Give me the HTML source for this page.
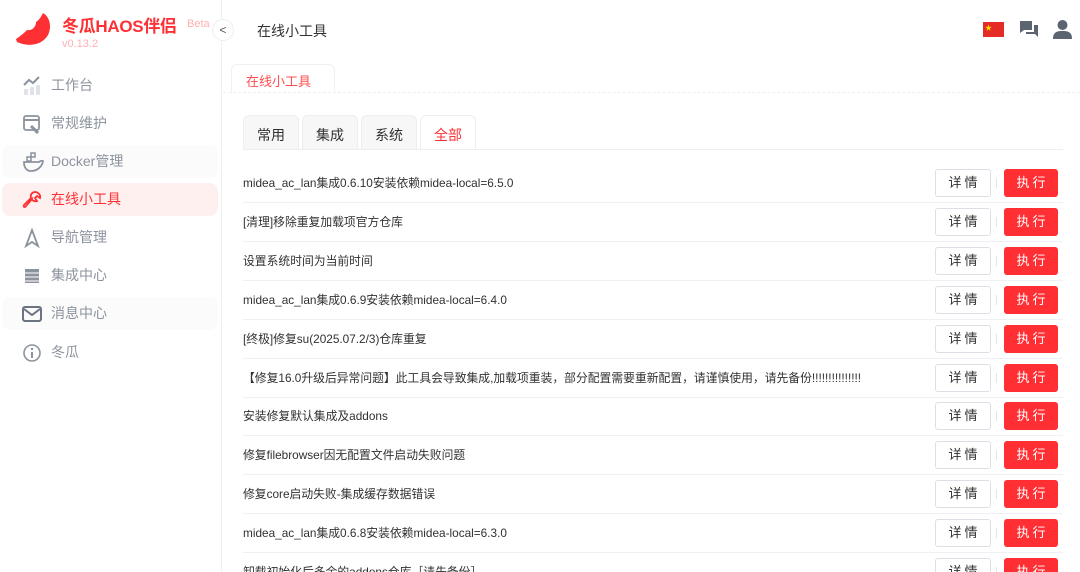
<!DOCTYPE html>
<html><head><meta charset="utf-8"><style>
*{margin:0;padding:0;box-sizing:border-box}
html,body{width:1080px;height:572px;overflow:hidden}
body{background:#fff;font-family:"Liberation Sans","Noto Sans CJK SC",sans-serif;position:relative;color:#303133}
.side{position:absolute;left:0;top:0;width:222px;height:572px;border-right:1px solid #eef0f3}
.brand{position:absolute;left:62px;top:12px;font-size:17px;font-weight:bold;color:#ff3034;letter-spacing:-0.3px}
.beta{position:absolute;left:187px;top:18px;font-size:11px;color:#ffb0b2}
.ver{position:absolute;left:62px;top:38px;font-size:11px;color:#ffb0b2}
.collapse{position:absolute;left:212px;top:19px;width:22px;height:22px;border:1px solid #eee;border-radius:50%;background:#fff;font-size:12px;color:#555;text-align:center;line-height:20px}
.mi{position:absolute;left:2px;width:216px;height:33px;border-radius:8px;font-size:14px;color:#8c939d;line-height:33px;padding-left:49px}
.mi svg{position:absolute;left:20px;top:7px}
.mi.hov{background:#fbfbfc}
.mi.act{background:#fff0f0;color:#ff3034}
.top{position:absolute;left:257px;top:21px;font-size:14px;color:#303133}
.ptab{position:absolute;left:231px;top:64px;width:104px;height:29px;border:1px solid #eef0f3;border-bottom:none;border-radius:6px 6px 0 0;color:#ff4d4f;font-size:13px;padding:6px 0 0 14px}
.dline{position:absolute;left:223px;top:92px;width:857px;border-top:1px dashed #eceef2}
.tabs{position:absolute;left:243px;top:115px}
.tab{position:absolute;top:0;height:34px;border:1px solid #eee;border-bottom:none;border-radius:6px 6px 0 0;background:#f7f7f7;font-size:14px;color:#303133;text-align:center;line-height:38px}
.tabline{position:absolute;left:243px;top:149px;width:820px;border-top:1px solid #eee}
.row{position:absolute;left:243px;width:820px;height:39px;border-bottom:1px solid #eef0f3;font-size:11.8px;color:#303133}
.row span{position:absolute;left:0;top:10px;white-space:nowrap}
.b1{position:absolute;left:692px;top:5px;width:56px;height:28px;border:1px solid #dcdfe6;border-radius:3px;font-size:13px;text-align:center;line-height:26px;letter-spacing:3px;padding-left:3px}
.sep{position:absolute;left:753px;top:14px;width:1px;height:10px;background:#e5e5e5}
.b2{position:absolute;left:761px;top:5px;width:54px;height:28px;background:#ff2f34;border-radius:3px;color:#fff;font-size:13px;text-align:center;line-height:28px;letter-spacing:3px;padding-left:3px}
</style></head><body>
<div class="side">
<svg style="position:absolute;left:14px;top:11px" width="38" height="36" viewBox="0 0 38 36"><path d="M29 2 C36 6 38 16 34 24 C29 33 16 37 3 31 L2 28 C8 24 10 22 13 19 C18 20 22 16 22 11 C25 9 27 6 29 2Z" fill="#ff3034"/></svg>
<div class="brand">冬瓜HAOS伴侣</div><div class="beta">Beta</div><div class="ver">v0.13.2</div>
<div class="mi" style="top:69px"><svg width="20" height="20" viewBox="0 0 20 20"><rect x="2" y="13" width="4" height="6" rx="1" fill="#dfe2e6"/><rect x="8" y="11" width="4" height="8" rx="1" fill="#dfe2e6"/><rect x="14" y="9" width="4" height="10" rx="1" fill="#dfe2e6"/><path d="M2 9 L7 4 L11 7 L17 1" stroke="#8c939d" stroke-width="2" fill="none"/></svg>工作台</div>
<div class="mi" style="top:107px"><svg width="20" height="20" viewBox="0 0 20 20"><rect x="2" y="2" width="15" height="14" rx="2" stroke="#8c939d" stroke-width="1.8" fill="none"/><path d="M2 6H17" stroke="#8c939d" stroke-width="2"/><path d="M9 12 L16 19" stroke="#8c939d" stroke-width="3"/></svg>常规维护</div>
<div class="mi hov" style="top:145px"><svg width="22" height="20" viewBox="0 0 22 20"><path d="M2 10 H17 C19 8 21 9 21 9 C20 15 15 19 9 19 C4 19 2 15 2 10Z" stroke="#8c939d" stroke-width="1.8" fill="none"/><rect x="5" y="5" width="4" height="4" stroke="#8c939d" stroke-width="1.5" fill="none"/><rect x="9" y="1" width="4" height="4" stroke="#8c939d" stroke-width="1.5" fill="none"/></svg>Docker管理</div>
<div class="mi act" style="top:183px"><svg width="20" height="20" viewBox="0 0 20 20"><path d="M13 2 C16 2 19 5 18 8 L15 6 L13 8 L15 11 C12 12 10 10 10 9 L4 16 C3 18 1 17 2 15 L9 8 C8 5 10 2 13 2Z" stroke="#ff3034" stroke-width="1.8" fill="none"/></svg>在线小工具</div>
<div class="mi" style="top:221px"><svg width="20" height="20" viewBox="0 0 20 20"><path d="M10 2 L16 18 L10 14 L4 18Z" stroke="#8c939d" stroke-width="1.8" fill="none"/></svg>导航管理</div>
<div class="mi" style="top:259px"><svg width="20" height="20" viewBox="0 0 20 20"><rect x="3" y="3" width="14" height="14" fill="#8c939d"/><path d="M1 7H19M1 11H19M1 15H19" stroke="#fff" stroke-width="1"/></svg>集成中心</div>
<div class="mi hov" style="top:297px"><svg width="20" height="20" viewBox="0 0 20 20"><rect x="1" y="3" width="18" height="14" rx="2" stroke="#6b7280" stroke-width="2" fill="none"/><path d="M2 5 L10 11 L18 5" stroke="#6b7280" stroke-width="2" fill="none"/></svg>消息中心</div>
<div class="mi" style="top:336px"><svg width="20" height="20" viewBox="0 0 20 20"><circle cx="10" cy="10" r="8" stroke="#8c939d" stroke-width="1.6" fill="none"/><path d="M10 9V15" stroke="#8c939d" stroke-width="2"/><circle cx="10" cy="6" r="1.2" fill="#8c939d"/></svg>冬瓜</div>
</div>
<div class="collapse">&lt;</div>
<div class="top">在线小工具</div>
<svg style="position:absolute;left:983px;top:22px" width="21" height="15"><rect width="21" height="15" fill="#e52b26"/><text x="2" y="8" font-size="7" fill="#ffde00">★</text></svg>
<svg style="position:absolute;left:1019px;top:20px" width="20" height="18" viewBox="0 0 20 18"><path d="M1 1H13V10H5L1 13Z" fill="#5b6470"/><path d="M15 5H19V17L16 14H7V12H15Z" fill="#5b6470"/></svg>
<svg style="position:absolute;left:1052px;top:19px" width="21" height="20" viewBox="0 0 21 20"><circle cx="10.5" cy="6" r="5" fill="#5b6470"/><path d="M1 20 C1 13 5 12 10.5 12 C16 12 20 13 20 20Z" fill="#5b6470"/></svg>
<div class="ptab">在线小工具</div>
<div class="dline"></div>
<div class="tabs">
<div class="tab" style="left:0;width:56px">常用</div>
<div class="tab" style="left:59px;width:56px">集成</div>
<div class="tab" style="left:118px;width:56px">系统</div>
<div class="tab" style="left:177px;width:56px;background:#fff;color:#ff3034;height:35px">全部</div>
</div>
<div class="tabline" style="left:476px;width:587px"></div>
<div class="tabline" style="width:233px;border-color:#eee"></div>
<div class="row" style="top:164px"><span>midea_ac_lan集成0.6.10安装依赖midea-local=6.5.0</span><div class="b1">详情</div><div class="sep"></div><div class="b2">执行</div></div>
<div class="row" style="top:203px"><span>[清理]移除重复加载项官方仓库</span><div class="b1">详情</div><div class="sep"></div><div class="b2">执行</div></div>
<div class="row" style="top:242px"><span>设置系统时间为当前时间</span><div class="b1">详情</div><div class="sep"></div><div class="b2">执行</div></div>
<div class="row" style="top:281px"><span>midea_ac_lan集成0.6.9安装依赖midea-local=6.4.0</span><div class="b1">详情</div><div class="sep"></div><div class="b2">执行</div></div>
<div class="row" style="top:320px"><span>[终极]修复su(2025.07.2/3)仓库重复</span><div class="b1">详情</div><div class="sep"></div><div class="b2">执行</div></div>
<div class="row" style="top:359px"><span>【修复16.0升级后异常问题】此工具会导致集成,加载项重装，部分配置需要重新配置，请谨慎使用，请先备份!!!!!!!!!!!!!!!</span><div class="b1">详情</div><div class="sep"></div><div class="b2">执行</div></div>
<div class="row" style="top:397px"><span>安装修复默认集成及addons</span><div class="b1">详情</div><div class="sep"></div><div class="b2">执行</div></div>
<div class="row" style="top:436px"><span>修复filebrowser因无配置文件启动失败问题</span><div class="b1">详情</div><div class="sep"></div><div class="b2">执行</div></div>
<div class="row" style="top:475px"><span>修复core启动失败-集成缓存数据错误</span><div class="b1">详情</div><div class="sep"></div><div class="b2">执行</div></div>
<div class="row" style="top:514px"><span>midea_ac_lan集成0.6.8安装依赖midea-local=6.3.0</span><div class="b1">详情</div><div class="sep"></div><div class="b2">执行</div></div>
<div class="row" style="top:553px"><span>卸载初始化后多余的addons仓库［请先备份］</span><div class="b1">详情</div><div class="sep"></div><div class="b2">执行</div></div>
</body></html>
